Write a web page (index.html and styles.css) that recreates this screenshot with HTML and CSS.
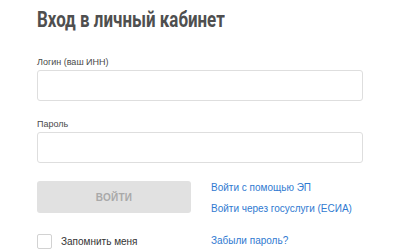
FILE: index.html
```html
<!DOCTYPE html>
<html lang="ru">

<head>
    <meta charset="UTF-8">
    <meta name="viewport" content="width=device-width, initial-scale=1.0">
    <title>Вход в личный кабинет</title>
    <link rel="stylesheet" href="styles.css">
</head>

<body>
    <div class="login">
        <h1 class="login-title"><span class="login-title-text">Вход в личный кабинет</span></h1>
        <div class="field">
            <label class="field-label" for="login">Логин (ваш ИНН)</label>
            <input class="field-input" type="text" id="login">
        </div>
        <div class="field">
            <label class="field-label" for="password">Пароль</label>
            <input class="field-input" type="password" id="password">
        </div>
        <div class="actions">
            <div class="actions-left">
                <button class="btn-submit" disabled>ВОЙТИ</button>
                <label class="remember">
                    <span class="remember-box"></span>
                    Запомнить меня
                </label>
            </div>
            <div class="actions-right">
                <a class="link" href="#">Войти с помощью ЭП</a>
                <a class="link" href="#">Войти через госуслуги (ЕСИА)</a>
                <a class="link link-forgot" href="#">Забыли пароль?</a>
            </div>
        </div>
    </div>
</body>

</html>
```

FILE: styles.css
```css
html,
body {
    margin: 0;
    background: #fff;
}

* {
    box-sizing: border-box;
}

.login {
    padding-left: 37px;
    font-family: "Liberation Sans", Arial, sans-serif;
    font-size: 10px;
    color: #444;
}

.login-title {
    margin: 0 0 23px;
    padding-top: 7px;
    font-family: Roboto, "Liberation Sans", sans-serif;
    font-weight: bold;
    font-size: 22px;
    line-height: 26px;
    color: #4f4f4f;
    white-space: nowrap;
}

/* no condensed face installed, so squeeze the regular one */
.login-title-text {
    display: inline-block;
    transform: scaleX(0.77);
    transform-origin: left center;
}

.field {
    display: flex;
    flex-direction: column;
    margin-bottom: 17px;
}

.field-label {
    font-size: 9px;
    line-height: 12px;
    margin-bottom: 2px;
    color: #4a4a4a;
}

.field-input {
    width: 326px;
    height: 31px;
    border: 1px solid #dedede;
    border-radius: 3px;
    background: #fff;
    outline: none;
}

.actions {
    display: flex;
    margin-top: 18px;
}

.actions-left {
    width: 174px;
    display: flex;
    flex-direction: column;
}

.btn-submit {
    width: 154px;
    height: 32px;
    border: none;
    border-radius: 3px;
    background: #e1e1e1;
    color: #a9a9a9;
    font-family: "Liberation Sans", Arial, sans-serif;
    font-weight: bold;
    font-size: 10px;
    letter-spacing: 0.3px;
}

.remember {
    display: flex;
    align-items: center;
    margin-top: 21px;
    color: #333;
    line-height: 15px;
}

.remember-box {
    width: 15px;
    height: 15px;
    border: 1px solid #d2d2d2;
    border-radius: 2px;
    margin-right: 9px;
}

.actions-right {
    display: flex;
    flex-direction: column;
}

.link {
    color: #2f7ad1;
    text-decoration: none;
    font-size: 10px;
    line-height: 14px;
    margin-bottom: 7px;
}

.link-forgot {
    margin-top: 11px;
}
```
